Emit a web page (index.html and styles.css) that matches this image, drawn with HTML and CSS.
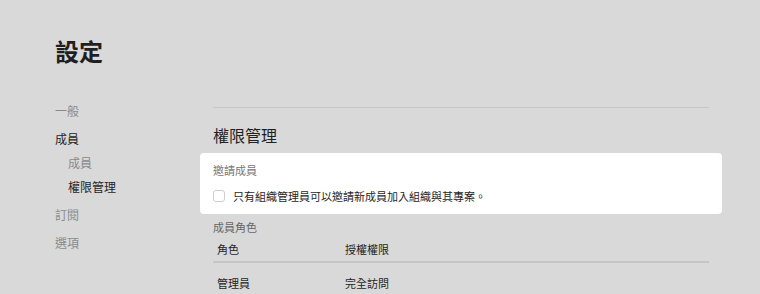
FILE: index.html
```html
<!DOCTYPE html>
<html lang="zh-Hant">
<head>
    <meta charset="UTF-8">
    <meta name="viewport" content="width=device-width, initial-scale=1.0">
    <title>設定</title>
    <link rel="stylesheet" href="styles.css">
</head>
<body>
    <div class="page">
        <h1 class="title">設定</h1>
        <div class="layout">
            <nav class="sidebar">
                <a class="nav-item">一般</a>
                <a class="nav-item active">成員</a>
                <a class="nav-item sub">成員</a>
                <a class="nav-item sub active">權限管理</a>
                <a class="nav-item">訂閱</a>
                <a class="nav-item">選項</a>
            </nav>
            <main class="main">
                <hr class="divider">
                <h2 class="section-title">權限管理</h2>
                <div class="card">
                    <div class="card-label">邀請成員</div>
                    <label class="check-row">
                        <span class="checkbox"></span>
                        只有組織管理員可以邀請新成員加入組織與其專案。
                    </label>
                </div>
                <div class="group-label">成員角色</div>
                <table class="roles">
                    <thead>
                        <tr><th class="col-role">角色</th><th>授權權限</th></tr>
                    </thead>
                    <tbody>
                        <tr><td class="col-role">管理員</td><td>完全訪問</td></tr>
                    </tbody>
                </table>
            </main>
        </div>
    </div>
</body>
</html>
```

FILE: styles.css
```css
body {
    margin: 0;
    padding: 0;
    background-color: #d9d9d9;
    color: #1f1f1f;
    font-family: "Noto Sans CJK TC", "Noto Sans", sans-serif;
    overflow: hidden;
}
.page {
    padding-left: 55px;
}
.title {
    margin: 39px 0 0;
    font-size: 24px;
    line-height: 24px;
    font-weight: 700;
}
.layout {
    display: grid;
    grid-template-columns: 158px 496px;
    margin-top: 40px;
}
.sidebar {
    display: flex;
    flex-direction: column;
}
.nav-item {
    font-size: 12px;
    line-height: 16px;
    color: #8a8a8a;
    margin-top: 12px;
}
.nav-item:first-child {
    margin-top: 0;
}
.nav-item.sub {
    padding-left: 13px;
    margin-top: 8px;
}
.nav-item.active {
    color: #1f1f1f;
}
.main {
    display: flex;
    flex-direction: column;
}
.divider {
    margin: 4px 0 0;
    border: none;
    border-top: 1px solid #c6c6c6;
}
.section-title {
    margin: 16px 0 0;
    font-size: 16px;
    line-height: 22px;
    font-weight: 400;
}
.card {
    margin: 7px -13px 0;
    padding: 9px 13px 10px;
    background-color: #fff;
    border-radius: 4px;
}
.card-label {
    font-size: 11px;
    line-height: 16px;
    color: #777;
}
.check-row {
    display: flex;
    align-items: center;
    gap: 8px;
    margin-top: 10px;
    font-size: 11px;
    line-height: 16px;
}
.checkbox {
    width: 10px;
    height: 10px;
    border: 1px solid #cfcfcf;
    border-radius: 3px;
    background-color: #fff;
}
.group-label {
    margin-top: 5px;
    font-size: 11px;
    line-height: 16px;
    color: #666;
}
.roles {
    border-collapse: collapse;
    font-size: 11px;
    line-height: 16px;
}
.roles th {
    text-align: left;
    font-weight: 400;
    padding: 6px 4px 4px;
    border-bottom: 2px solid #c6c6c6;
}
.roles td {
    padding: 12px 4px 4px;
}
.roles .col-role {
    width: 120px;
}
```
